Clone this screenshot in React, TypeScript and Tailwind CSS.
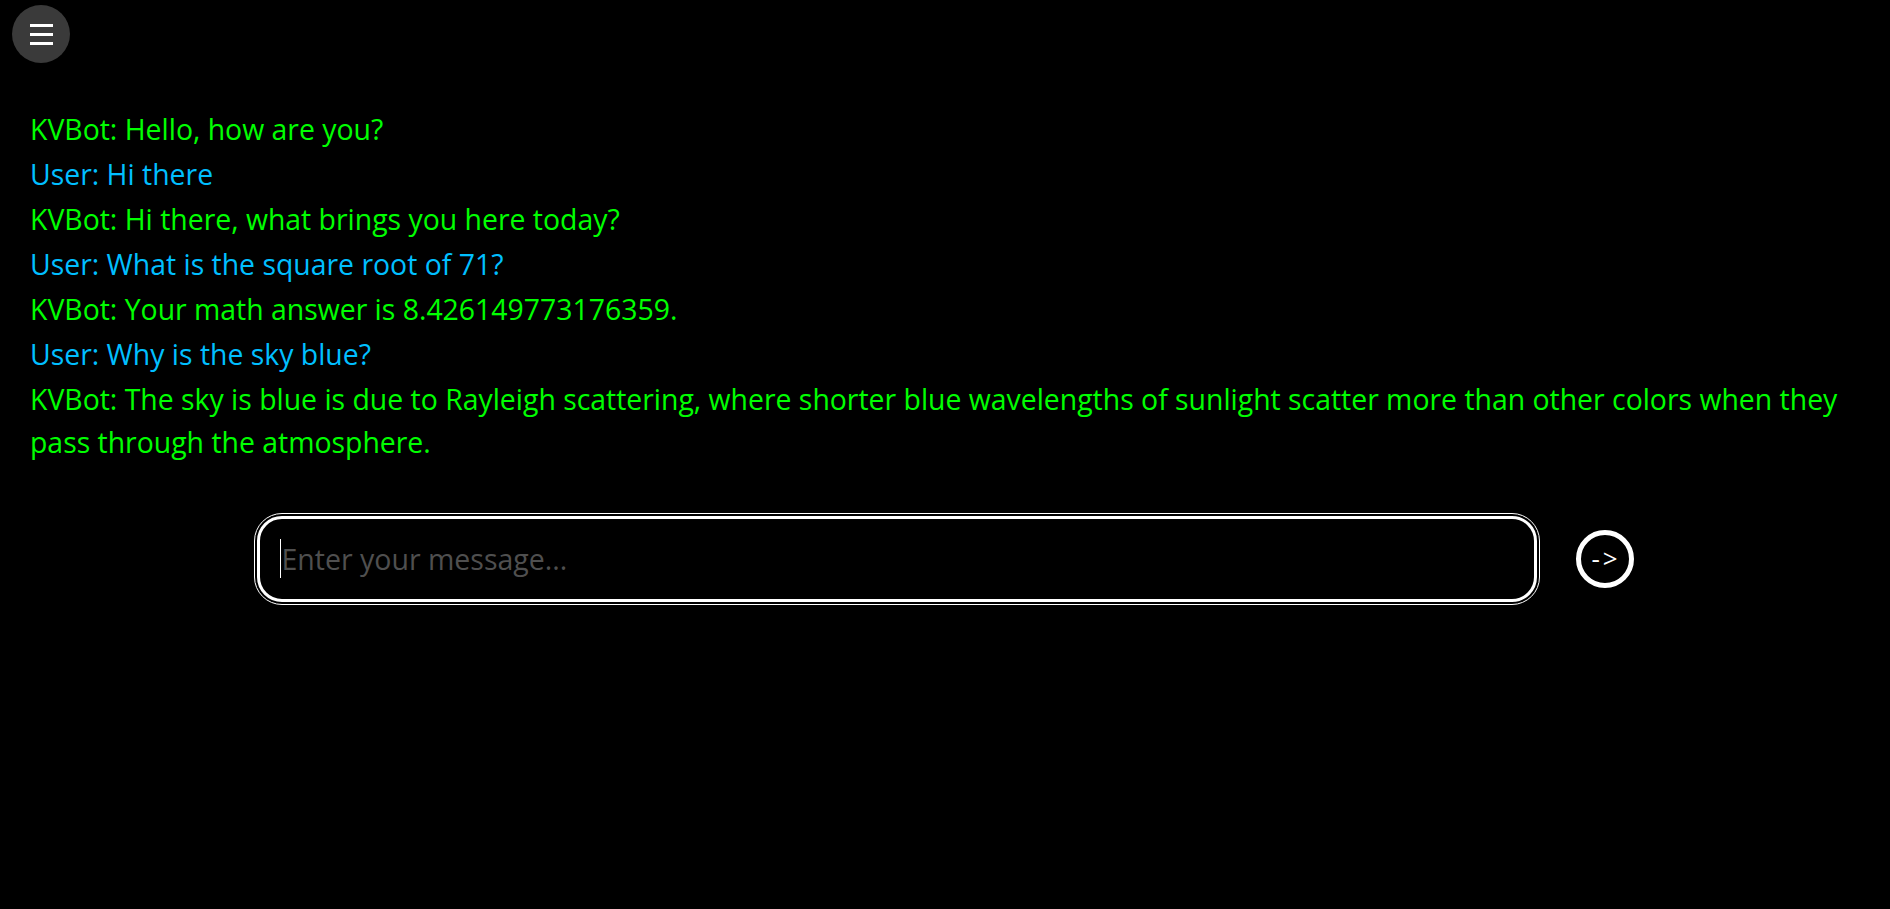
import React from "react";

const messages: { who: "bot" | "user"; text: string }[] = [
  { who: "bot", text: "KVBot: Hello, how are you?" },
  { who: "user", text: "User: Hi there" },
  { who: "bot", text: "KVBot: Hi there, what brings you here today?" },
  { who: "user", text: "User: What is the square root of 71?" },
  { who: "bot", text: "KVBot: Your math answer is 8.426149773176359." },
  { who: "user", text: "User: Why is the sky blue?" },
  {
    who: "bot",
    text: "KVBot: The sky is blue is due to Rayleigh scattering, where shorter blue wavelengths of sunlight scatter more than other colors when they pass through the atmosphere.",
  },
];

export default function App() {
  return (
    <div className="h-screen overflow-hidden bg-black font-['Open_Sans','Noto_Sans',sans-serif]">
      <button className="ml-[12px] mt-[5px] w-[58px] h-[58px] rounded-full bg-[#3a3a3a] flex flex-col items-center justify-center gap-[6px]">
        <span className="block w-[23px] h-[3px] bg-white" />
        <span className="block w-[23px] h-[3px] bg-white" />
        <span className="block w-[23px] h-[3px] bg-white" />
      </button>
      <div className="px-[30px] mt-[45px]">
        {messages.map((m, i) => (
          <p
            key={i}
            className={`text-[28.4px] leading-[43px] mb-[2px] ${m.who === "bot" ? "text-[#00ff00]" : "text-[#00bfff]"}`}
          >
            {m.text}
          </p>
        ))}
      </div>
      <div className="flex justify-center items-center gap-[39px] mt-[52px]">
        <div className="relative">
          <input
            autoFocus
            className="block w-[1280px] h-[86px] bg-black border-[3px] border-white rounded-[25px] outline-solid outline-1 outline-white outline-offset-2 pl-[22px] text-white caret-white text-[28.5px] placeholder:text-[#4f4f4f]"
            placeholder="Enter your message..."
          />
          <span className="absolute left-[23px] top-[23px] w-px h-[39px] bg-white pointer-events-none" />
        </div>
        <button className="w-[58px] h-[58px] rounded-full border-[5px] border-white text-white text-[26px] tracking-[3px] leading-none flex items-center justify-center pb-[3px] pl-[3px]">
          -&gt;
        </button>
      </div>
    </div>
  );
}
